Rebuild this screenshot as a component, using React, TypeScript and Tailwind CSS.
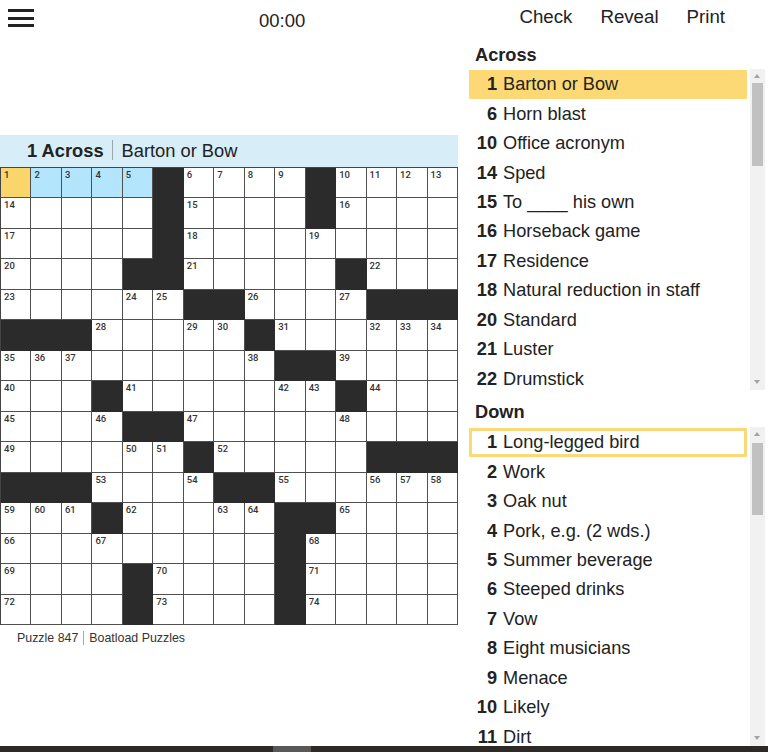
import React from "react";

const PATTERN = [
  ".....#....#....",
  ".....#....#....",
  ".....#.........",
  "....##.....#...",
  "......##....###",
  "###.....#......",
  ".........##....",
  "...#.......#...",
  "....##.........",
  "......#.....###",
  "###....##......",
  "...#.....##....",
  ".........#.....",
  "....#....#.....",
  "....#....#.....",
];

function computeNumbers(): number[][] {
  const nums: number[][] = [];
  let n = 1;
  for (let r = 0; r < 15; r++) {
    const row: number[] = [];
    for (let c = 0; c < 15; c++) {
      const white = PATTERN[r][c] === ".";
      if (!white) {
        row.push(0);
        continue;
      }
      const leftBlack = c === 0 || PATTERN[r][c - 1] === "#";
      const rightWhite = c < 14 && PATTERN[r][c + 1] === ".";
      const topBlack = r === 0 || PATTERN[r - 1][c] === "#";
      const belowWhite = r < 14 && PATTERN[r + 1][c] === ".";
      if ((leftBlack && rightWhite) || (topBlack && belowWhite)) {
        row.push(n++);
      } else row.push(0);
    }
    nums.push(row);
  }
  return nums;
}

const ACROSS: [number, string][] = [
  [1, "Barton or Bow"],
  [6, "Horn blast"],
  [10, "Office acronym"],
  [14, "Sped"],
  [15, "To ____ his own"],
  [16, "Horseback game"],
  [17, "Residence"],
  [18, "Natural reduction in staff"],
  [20, "Standard"],
  [21, "Luster"],
  [22, "Drumstick"],
];

const DOWN: [number, string][] = [
  [1, "Long-legged bird"],
  [2, "Work"],
  [3, "Oak nut"],
  [4, "Pork, e.g. (2 wds.)"],
  [5, "Summer beverage"],
  [6, "Steeped drinks"],
  [7, "Vow"],
  [8, "Eight musicians"],
  [9, "Menace"],
  [10, "Likely"],
  [11, "Dirt"],
];

function Scrollbar({ thumbTop, thumbHeight }: { thumbTop: number; thumbHeight: number }) {
  return (
    <div className="relative w-[15px] h-full bg-[#f1f1f1] shrink-0">
      <div className="absolute left-[4px] top-[5px] w-0 h-0 border-l-[3.5px] border-r-[3.5px] border-b-[4px] border-l-transparent border-r-transparent border-b-[#a3a3a3]" />
      <div
        className="absolute left-[2px] w-[11px] bg-[#c1c1c1]"
        style={{ top: thumbTop, height: thumbHeight }}
      />
      <div className="absolute left-[4px] bottom-[6px] w-0 h-0 border-l-[3.5px] border-r-[3.5px] border-t-[4px] border-l-transparent border-r-transparent border-t-[#a3a3a3]" />
    </div>
  );
}

function ClueItem({
  num,
  text,
  mode,
}: {
  num: number;
  text: string;
  mode: "none" | "fill" | "border";
}) {
  const base = "flex items-center h-[29.45px] text-[18.2px] leading-[21px] text-[#222]";
  const cls =
    mode === "fill"
      ? base + " bg-[#fdd976]"
      : mode === "border"
      ? base + " border-[3px] border-[#fbd978]"
      : base;
  return (
    <div className={cls}>
      <span className={mode === "border" ? "w-[25px] text-right font-bold" : "w-[28px] text-right font-bold"}>
        {num}
      </span>
      <span className="ml-[6px] whitespace-nowrap">{text}</span>
    </div>
  );
}

export default function App() {
  const nums = computeNumbers();
  return (
    <div
      className="relative w-[768px] h-[752px] overflow-hidden bg-white text-[#222]"
      style={{ fontFamily: '"Liberation Sans", Arial, sans-serif' }}
    >
      {/* Header */}
      <div className="flex items-start h-[40px]">
        <div className="w-[259px] pl-[8px] pt-[9px]">
          <div className="flex flex-col gap-[4.5px] w-[26px]">
            <div className="h-[3px] bg-[#222]" />
            <div className="h-[3px] bg-[#222]" />
            <div className="h-[3px] bg-[#222]" />
          </div>
        </div>
        <div className="pt-[9.5px] text-[18.5px] leading-[21px]">00:00</div>
        <div className="flex-1" />
        <div className="flex gap-[28px] pt-[6px] pr-[43px] text-[18.7px] leading-[21px]">
          <span>Check</span>
          <span>Reveal</span>
          <span>Print</span>
        </div>
      </div>

      <div className="flex">
        {/* Left column */}
        <div className="w-[458px] shrink-0">
          <div className="h-[95px]" />
          <div className="h-[32px] bg-[#d7eef8] flex items-center pl-[27px] pb-[2px] text-[18.3px] leading-[21px]">
            <span className="font-bold">1 Across</span>
            <span className="w-px h-[20px] bg-[#9aa6ad] mx-[8.5px]" />
            <span>Barton or Bow</span>
          </div>
          <div className="grid grid-cols-15 w-[458px] border-l border-t border-[#444]">
            {PATTERN.map((row, r) =>
              row.split("").map((ch, c) => {
                const black = ch === "#";
                let bg = "bg-white border-[#505050]";
                if (black) bg = "bg-[#2b2b2b] border-[#2b2b2b]";
                else if (r === 0 && c === 0) bg = "bg-[#f9d56c] border-[#505050]";
                else if (r === 0 && c >= 1 && c <= 4) bg = "bg-[#b3e5fc] border-[#505050]";
                return (
                  <div
                    key={r * 15 + c}
                    className={"relative h-[30.47px] border-r border-b " + bg}
                  >
                    {nums[r][c] > 0 && (
                      <span
                        className="absolute left-[3px] top-[1px] text-[9.5px] leading-[11px] font-medium text-[#333]"
                        style={{ fontFamily: 'Roboto, "DejaVu Sans", sans-serif' }}
                      >
                        {nums[r][c]}
                      </span>
                    )}
                  </div>
                );
              })
            )}
          </div>
          <div className="flex items-center pl-[17px] pt-[6px] text-[12.4px] leading-[14px] text-[#333]">
            <span>Puzzle 847</span>
            <span className="w-px h-[14px] bg-[#aaa] mx-[5px]" />
            <span>Boatload Puzzles</span>
          </div>
        </div>

        {/* Right column */}
        <div className="ml-[11px] w-[297px]">
          <div className="h-[29px] pt-[4px] pl-[6px] text-[18.2px] leading-[22px] font-bold">Across</div>
          <div className="flex h-[321px] overflow-hidden">
            <div className="w-[278px] shrink-0 pt-[1px]">
              {ACROSS.map(([n, t], i) => (
                <ClueItem key={n} num={n} text={t} mode={i === 0 ? "fill" : "none"} />
              ))}
            </div>
            <div className="w-[3px] shrink-0" />
            <Scrollbar thumbTop={14} thumbHeight={83} />
          </div>
          <div className="h-[37px] pt-[11px] pl-[6px] text-[18.2px] leading-[22px] font-bold">Down</div>
          <div className="flex h-[319px] overflow-hidden">
            <div className="w-[278px] shrink-0 pt-[1px]">
              {DOWN.map(([n, t], i) => (
                <ClueItem key={n} num={n} text={t} mode={i === 0 ? "border" : "none"} />
              ))}
            </div>
            <div className="w-[3px] shrink-0" />
            <Scrollbar thumbTop={16} thumbHeight={72} />
          </div>
        </div>
      </div>

      {/* bottom dark bar */}
      <div className="absolute left-0 right-0 bottom-0 h-[6px] bg-[#2c2927]">
        <div className="absolute left-[273px] w-[38px] h-full bg-[#585858]" />
      </div>
    </div>
  );
}
